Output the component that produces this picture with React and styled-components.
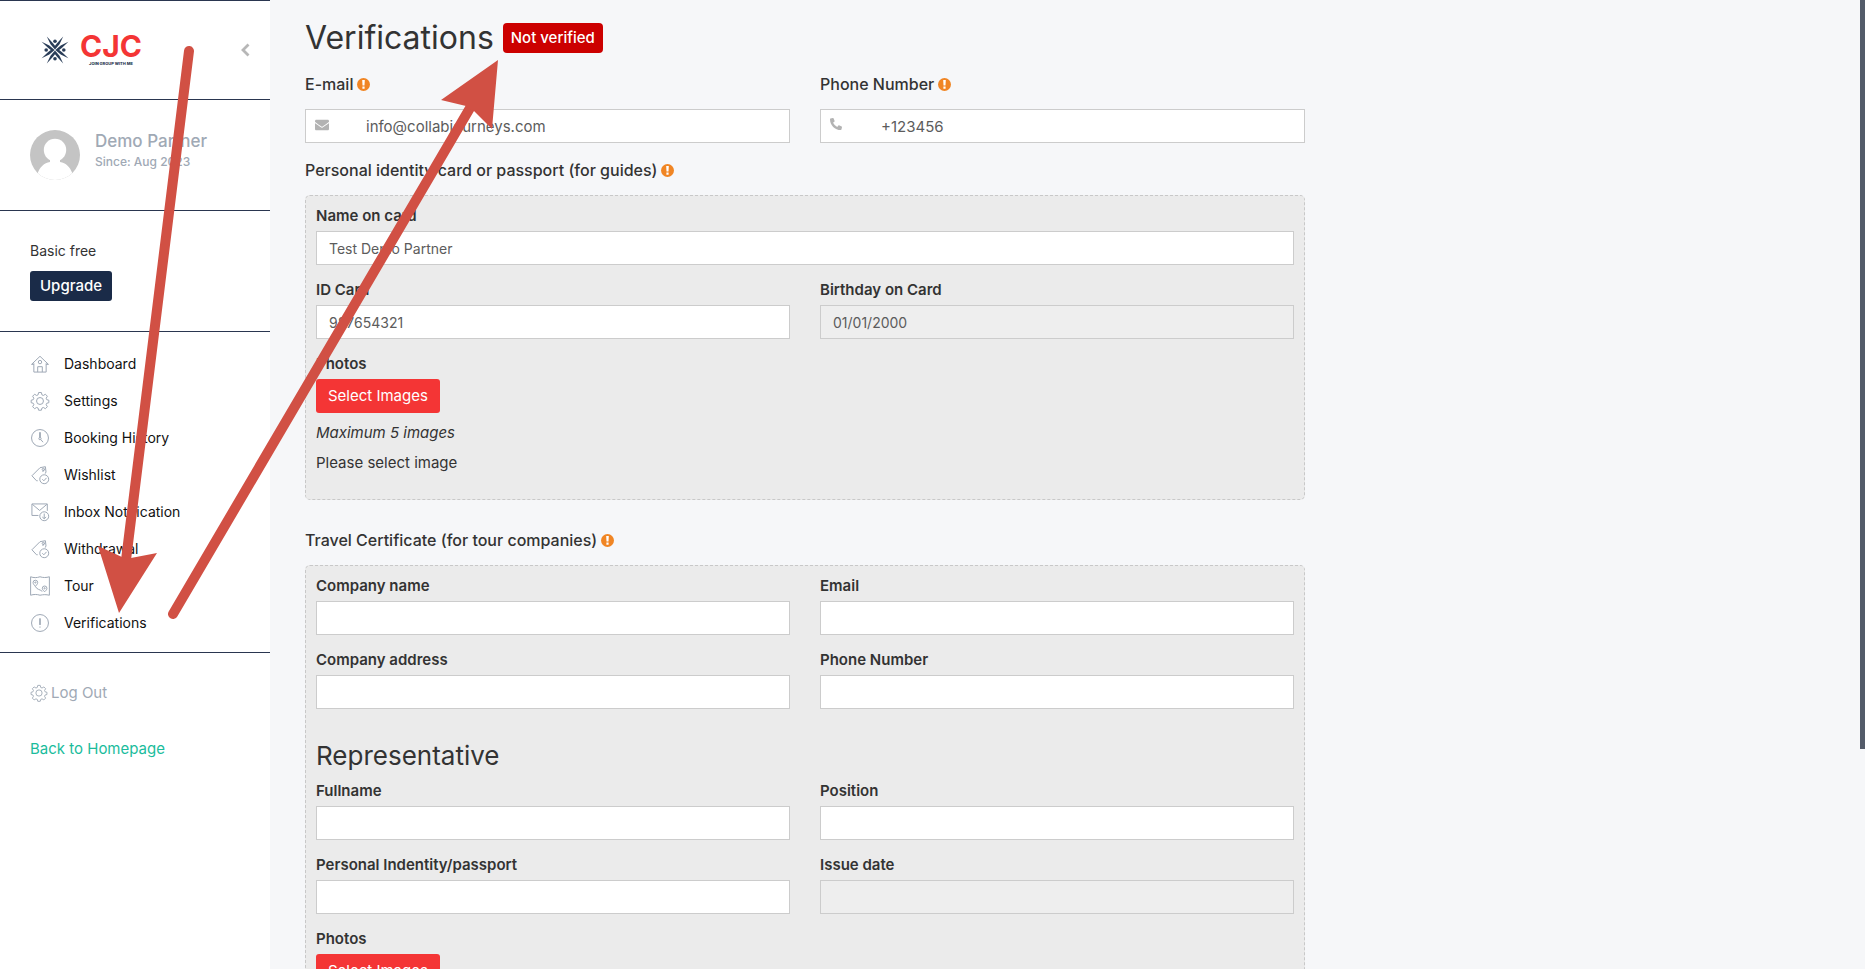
import { useState } from "react";
import styled, { createGlobalStyle } from "styled-components";
import { FaEnvelope, FaPhoneAlt } from "react-icons/fa";

const GlobalStyle = createGlobalStyle`
  *, *::before, *::after {
    box-sizing: border-box;
  }
  body {
    margin: 0;
    background: #f6f7f9;
    color: #333;
    font-family: Inter, "Open Sans", sans-serif;
    font-size: 15px;
    line-height: 20px;
  }
  button, input {
    font: inherit;
  }
  a {
    color: inherit;
    text-decoration: none;
  }
`

const Page = styled.div`
  position: relative;
  display: flex;
  height: 100vh;
  overflow: hidden;
`

const Sidebar = styled.aside`
  flex: 0 0 270px;
  background: #fff;
  border-top: 1px solid #2a3650;
`

const Block = styled.div`
  padding: ${props => props.$pad};
  border-bottom: 1px solid #2a3650;
`

const Brand = styled(Block)`
  display: flex;
  align-items: center;
  justify-content: space-between;
  height: 99px;
`

const Logo = styled.a`
  display: flex;
  align-items: center;
  gap: 11px;
`

const LogoText = styled.span`
  display: flex;
  flex-direction: column;
  align-items: center;
`

const LogoName = styled.span`
  color: #f43535;
  font-size: 30px;
  font-weight: 700;
  line-height: 28px;
`

const LogoSlogan = styled.span`
  color: #2a3650;
  font-size: 4px;
  font-weight: 800;
  line-height: 8px;
`

const CollapseButton = styled.button`
  display: flex;
  padding: 0;
  border: 0;
  background: none;
`

const Profile = styled(Block)`
  display: flex;
  gap: 15px;
  height: 111px;
`

const ProfileName = styled.div`
  color: #a0a9b5;
  font-size: 17px;
  font-weight: 500;
  line-height: 22px;
`

const ProfileSince = styled.div`
  color: #a0a9b5;
  font-size: 12px;
  font-weight: 500;
  line-height: 20px;
`

const Plan = styled(Block)`
  height: 121px;
  font-size: 14px;
`

const UpgradeButton = styled.button`
  display: block;
  height: 30px;
  margin-top: 10px;
  padding: 0 10px;
  border: 0;
  border-radius: 3px;
  background: #1a2b48;
  color: #fff;
  font-size: 15px;
  font-weight: 500;
`

const MenuLink = styled.a`
  display: flex;
  align-items: center;
  gap: 14px;
  height: 37px;
  color: #111;
  font-size: 14px;
`

const SideLinks = styled.div`
  display: flex;
  flex-direction: column;
  align-items: flex-start;
  gap: 36px;
  padding: 30px;
`

const LogoutLink = styled.a`
  display: flex;
  align-items: center;
  gap: 3px;
  color: #a0a9b5;
`

const HomeLink = styled.a`
  color: #1abc9c;
`

const Main = styled.main`
  flex: 1;
  padding: 18px 35px 40px;
  overflow-y: auto;
  scrollbar-width: none;
`

const Form = styled.form`
  max-width: 1000px;
`

const TitleRow = styled.div`
  display: flex;
  align-items: center;
  gap: 9px;
  height: 40px;
  margin-bottom: 14px;
`

const Title = styled.h2`
  margin: 0;
  font-size: 32px;
  font-weight: 400;
`

const Badge = styled.span`
  padding: 5px 8px;
  border-radius: 4px;
  background: #c00;
  color: #fff;
  font-weight: 500;
`

const Columns = styled.div`
  display: grid;
  grid-template-columns: 1fr 1fr;
  column-gap: 30px;
`

const SectionLabel = styled.label`
  display: flex;
  align-items: center;
  gap: 4px;
  height: 24px;
  margin-bottom: 13px;
  font-size: 16px;
  font-weight: 500;
`

const Control = styled.div`
  position: relative;
  margin-bottom: 15px;

  svg {
    position: absolute;
    top: 9px;
    left: 10px;
    color: #b3b3b3;
    font-size: ${props => props.$iconSize};
  }
`

const Input = styled.input`
  display: block;
  width: 100%;
  height: 34px;
  padding: 0 12px 0 ${props => (props.$withIcon ? "60px" : "12px")};
  border: 1px solid #ccc;
  border-radius: 0;
  outline: none;
  background: ${props => (props.readOnly ? "#eee" : "#fff")};
  color: #5c5c5c;
  font-size: ${props => (props.$withIcon ? "15px" : "14px")};
`

const Panel = styled.div`
  margin-bottom: 28px;
  padding: 10px 10px 26px;
  border: 1px dashed #c8c8c8;
  border-radius: 5px;
  background: #ebebeb;
`

const FieldWrap = styled.div`
  margin-bottom: 15px;
`

const FieldLabel = styled.label`
  display: block;
  margin-bottom: 5px;
  font-weight: 600;
`

const SubTitle = styled.h3`
  margin: 17px 0 10px;
  font-size: 26px;
  font-weight: 400;
  line-height: 30px;
`

const SelectButton = styled.button`
  display: block;
  height: 34px;
  padding: 0 12px;
  border: 0;
  border-radius: 3px;
  background: #f43535;
  color: #fff;
`

const Note = styled.p`
  margin: 10px 0 0;
  font-style: ${props => (props.$italic ? "italic" : "normal")};
`

const ScrollThumb = styled.div`
  position: absolute;
  top: 0;
  right: 0;
  width: 5px;
  height: 749px;
  background: #535b69;
`

const Arrows = styled.svg`
  position: absolute;
  top: 0;
  left: 0;
  pointer-events: none;
`

const icons = {
  home: (
    <>
      <path d="M1 12.500 12 2l11 10.500M4 11v11.500h16V11M1 12.500h3M20 12.500h3" />
      <path d="M9 22.500V15.500h6v7" />
      <circle cx="12" cy="9.500" r="2.200" />
    </>
  ),
  gear: (
    <>
      <circle cx="12" cy="12" r="4.500" />
      <path d="M10.200 1h3.600l.7 3 1.900.8 2.600-1.600 2.600 2.600-1.600 2.600.8 1.900 2.700.7v3.200l-2.700.7-.8 1.900 1.600 2.600-2.600 2.600-2.600-1.600-1.900.8-.7 2.800h-3.600l-.7-2.800-1.900-.8L5 22l-2.600-2.600L4 16.800l-.8-1.900-2.700-.7V11l2.700-.7L4 8.400 2.400 5.800 5 3.200l2.600 1.600L9.500 4z" strokeLinejoin="round" />
    </>
  ),
  clock: (
    <>
      <circle cx="12" cy="12" r="11" />
      <path d="M11.500 4.500v7M12.500 4.500v7M13 14l3 3.500" />
      <circle cx="12" cy="12.800" r="1.500" />
    </>
  ),
  tag: (
    <>
      <path d="M9 19.500 7.500 19.500 1.500 13 12 2.500 19 1.200l.8 6.800-1 2.200" />
      <circle cx="16.300" cy="4.800" r="1.500" />
      <path d="M15.500 8 18 4" />
      <circle cx="17.500" cy="17.500" r="5.800" />
      <path d="m15 17.500 2 2 3.500-3.800" />
    </>
  ),
  mail: (
    <>
      <path d="M10 16.500H1.500V1.500h20v9M2 2l9.500 8L21 2" />
      <circle cx="17.500" cy="17.500" r="5.800" />
      <path d="M17.500 14v6.500M15 18.500l2.500 2.300 2.500-2.300" />
    </>
  ),
  map: (
    <>
      <path d="M-.2 0c4 1.500 8 1.500 12.200 0 4 1.300 8 1.300 12.200 0v24c-4-1-8-1-12.200 0-4-1.300-8-1.300-12.200 0z" />
      <path d="M6 12.500c-2-2.300-3-3.500-3-5a3 3 0 0 1 6 0c0 1.500-1 2.700-3 5zM6 12.500c2 4.500 5.500 3.500 9 6.500" />
      <circle cx="6" cy="7.500" r=".8" />
      <path d="M18 19.500c-2-2-3-3-3-4.500a3 3 0 0 1 6 0c0 1.500-1 2.500-3 4.500z" />
      <circle cx="18" cy="15" r=".8" />
    </>
  ),
  alert: (
    <>
      <circle cx="12" cy="12" r="11" />
      <path d="M11.600 6v8.500M12.400 6v8.500M11.200 17.300h1.600" />
    </>
  )
}

const menu = [
  { text: "Dashboard", icon: "home" },
  { text: "Settings", icon: "gear" },
  { text: "Booking History", icon: "clock" },
  { text: "Wishlist", icon: "tag" },
  { text: "Inbox Notification", icon: "mail" },
  { text: "Withdrawal", icon: "tag" },
  { text: "Tour", icon: "map" },
  { text: "Verifications", icon: "alert" }
]

const LineIcon = ({ name, size = 20 }) => (
  <svg width={size} height={size} viewBox="-1 -1 26 26" fill="none" stroke="#9fa9b6" strokeWidth="1.3">
    {icons[name]}
  </svg>
)

const LogoMark = () => (
  <svg width="28" height="28" viewBox="0 0 28 28" fill="#2a3d58">
    {[0, 90, 180, 270].map(angle => (
      <g key={angle} transform={`rotate(${angle} 14 14)`}>
        <path d="M14 13.600 9.500 8.300 5.800.6 12 7.200l2 2.600 2-2.600L22.200.6 18.500 8.300z" />
        <circle cx="14" cy="5.200" r="1.800" />
      </g>
    ))}
  </svg>
)

const Avatar = () => (
  <svg width="50" height="50" viewBox="0 0 50 50">
    <clipPath id="face">
      <circle cx="25" cy="25" r="25" />
    </clipPath>
    <g clipPath="url(#face)">
      <rect width="50" height="50" fill="#c4c4c4" />
      <circle cx="25" cy="20" r="11.200" fill="#fff" />
      <path d="M20 28h10v4c6 1 10 5 12.500 11.500L44 50H6l1.500-6.500C10 37 14 33 20 32z" fill="#fff" />
    </g>
  </svg>
)

const Chevron = () => (
  <svg width="9" height="14" viewBox="0 0 9 14" fill="none" stroke="#b7b7b7" strokeWidth="2.800">
    <path d="M7.500 1.500 2 7l5.500 5.500" />
  </svg>
)

const WarnIcon = () => (
  <svg width="13" height="13" viewBox="0 0 13 13">
    <circle cx="6.500" cy="6.500" r="6.500" fill="#f08524" />
    <path d="M5.200 2h2.600l-.3 5.400h-2zM5.400 8.500h2.200v2.200H5.400z" fill="#fff" />
  </svg>
)

const Field = ({ id, label, value = "", readOnly }) => {
  const [text, setText] = useState(value)
  return (
    <FieldWrap>
      <FieldLabel htmlFor={id}>{label}</FieldLabel>
      <Input id={id} value={text} readOnly={readOnly} onChange={e => setText(e.target.value)} />
    </FieldWrap>
  )
}

const Photos = ({ id }) => (
  <>
    <FieldLabel htmlFor={id}>Photos</FieldLabel>
    <SelectButton id={id} type="button">Select Images</SelectButton>
    <Note $italic>Maximum 5 images</Note>
    <Note>Please select image</Note>
  </>
)

const SideNav = () => (
  <Sidebar>
    <Brand $pad="0 20px 0 41px">
      <Logo href="#">
        <LogoMark />
        <LogoText>
          <LogoName>CJC</LogoName>
          <LogoSlogan>JOIN GROUP WITH ME</LogoSlogan>
        </LogoText>
      </Logo>
      <CollapseButton type="button" aria-label="Collapse menu">
        <Chevron />
      </CollapseButton>
    </Brand>
    <Profile $pad="30px">
      <Avatar />
      <div>
        <ProfileName>Demo Partner</ProfileName>
        <ProfileSince>Since: Aug 2023</ProfileSince>
      </div>
    </Profile>
    <Plan $pad="30px">
      <div>Basic free</div>
      <UpgradeButton type="button">Upgrade</UpgradeButton>
    </Plan>
    <Block as="nav" $pad="13px 30px 11px">
      {menu.map(item => (
        <MenuLink href="#" key={item.text}>
          <LineIcon name={item.icon} />
          {item.text}
        </MenuLink>
      ))}
    </Block>
    <SideLinks>
      <LogoutLink href="#">
        <LineIcon name="gear" size={18} />
        Log Out
      </LogoutLink>
      <HomeLink href="#">Back to Homepage</HomeLink>
    </SideLinks>
  </Sidebar>
)

const App = () => {
  const [email, setEmail] = useState("info@collabjourneys.com")
  const [phone, setPhone] = useState("+123456")

  return (
    <Page>
      <GlobalStyle />
      <SideNav />
      <Main>
        <Form>
          <TitleRow>
            <Title>Verifications</Title>
            <Badge>Not verified</Badge>
          </TitleRow>
          <Columns>
            <div>
              <SectionLabel htmlFor="email">E-mail <WarnIcon /></SectionLabel>
              <Control $iconSize="14px">
                <FaEnvelope />
                <Input id="email" $withIcon value={email} onChange={e => setEmail(e.target.value)} />
              </Control>
            </div>
            <div>
              <SectionLabel htmlFor="phone">Phone Number <WarnIcon /></SectionLabel>
              <Control $iconSize="12px">
                <FaPhoneAlt />
                <Input id="phone" $withIcon value={phone} onChange={e => setPhone(e.target.value)} />
              </Control>
            </div>
          </Columns>

          <SectionLabel as="div">
            Personal identity card or passport (for guides) <WarnIcon />
          </SectionLabel>
          <Panel>
            <Field id="card-name" label="Name on card" value="Test Demo Partner" />
            <Columns>
              <Field id="card-id" label="ID Card" value="987654321" />
              <Field id="card-birthday" label="Birthday on Card" value="01/01/2000" readOnly />
            </Columns>
            <Photos id="card-photos" />
          </Panel>

          <SectionLabel as="div">
            Travel Certificate (for tour companies) <WarnIcon />
          </SectionLabel>
          <Panel>
            <Columns>
              <Field id="company-name" label="Company name" />
              <Field id="company-email" label="Email" />
              <Field id="company-address" label="Company address" />
              <Field id="company-phone" label="Phone Number" />
            </Columns>
            <SubTitle>Representative</SubTitle>
            <Columns>
              <Field id="rep-name" label="Fullname" />
              <Field id="rep-position" label="Position" />
              <Field id="rep-passport" label="Personal Indentity/passport" />
              <Field id="rep-issue" label="Issue date" readOnly />
            </Columns>
            <Photos id="rep-photos" />
          </Panel>
        </Form>
      </Main>
      <Arrows width="520" height="640" viewBox="0 0 520 640" fill="#d15044" stroke="#d15044">
        <path d="M189 51 126 560M173 614 470 108" strokeWidth="10" strokeLinecap="round" />
        <path d="M119 613 98 546 122 557 131 558 157 553zM498 60 441 100 466 106 474 111 492 129z" stroke="none" />
      </Arrows>
      <ScrollThumb />
    </Page>
  )
}

export default App;
